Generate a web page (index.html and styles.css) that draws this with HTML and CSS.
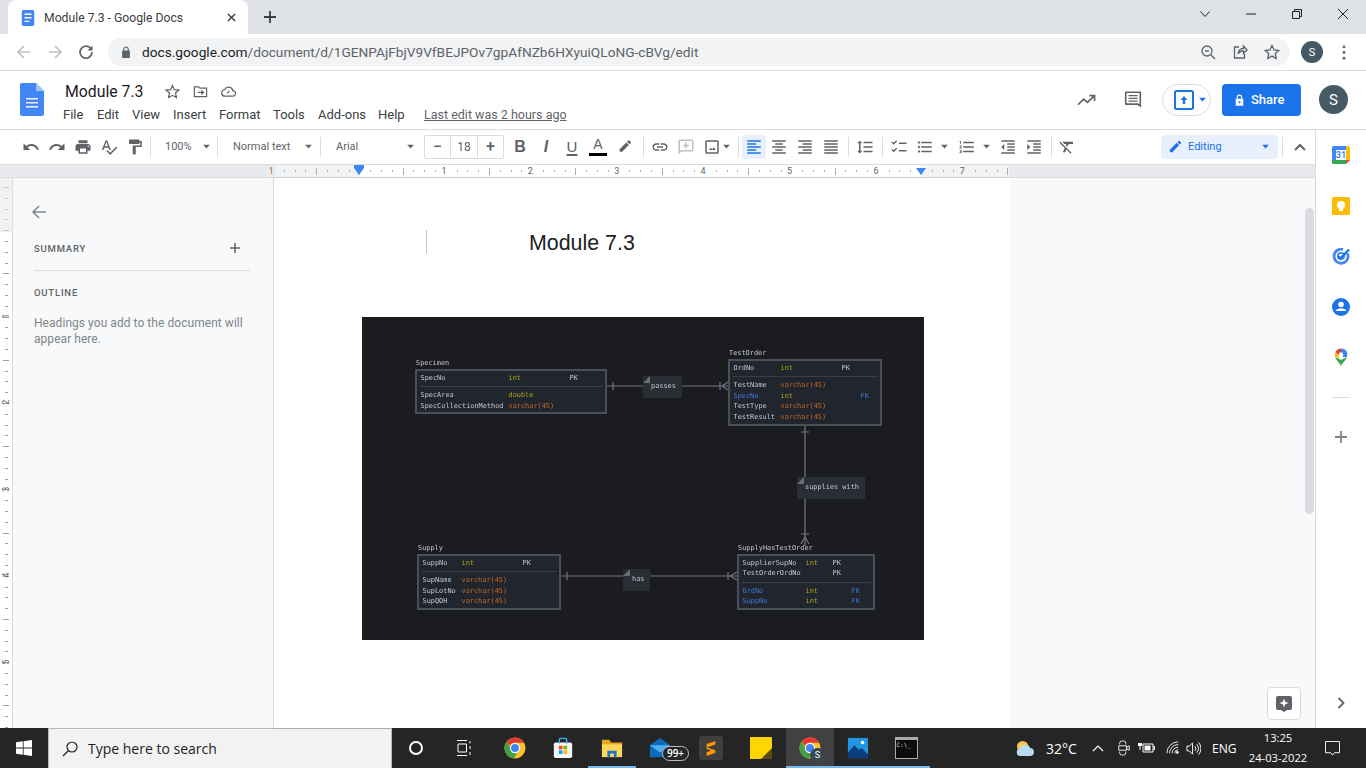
FILE: index.html
```html
<!DOCTYPE html>
<html lang="en">
<head>
<meta charset="utf-8">
<title>Module 7.3 - Google Docs</title>
<link rel="stylesheet" href="styles.css">
</head>
<body>
<svg class="sprite" width="0" height="0" aria-hidden="true">
  <symbol id="chrome" viewBox="0 0 24 24">
    <circle cx="12" cy="12" r="11.5" fill="#fbc02d"/>
    <path fill="#e53935" d="M12 .5a11.5 11.5 0 0 1 10 5.8H12a5.8 5.8 0 0 0-5.4 3.6L2.9 5A11.5 11.5 0 0 1 12 .5z"/>
    <path fill="#43a047" d="M2.9 5l5.2 9a5.8 5.8 0 0 0 6.3 3.3l-3.6 6.2A11.5 11.5 0 0 1 2.9 5z"/>
    <circle cx="12" cy="12" r="5.6" fill="#fff"/>
    <circle cx="12" cy="12" r="4.4" fill="#4285f4"/>
  </symbol>
  <symbol id="caret" viewBox="0 0 10 6"><path d="M1 1h8L5 5.5z"/></symbol>
</svg>

<div class="app">
  <div class="tabbar">
    <div class="tab">
      <svg class="tab-doc" viewBox="0 0 16 18"><rect x="1" width="14" height="18" rx="2" fill="#4285f4"/><path fill="#fff" d="M4 4h8v1.600H4zM4 8h8v1.600H4zM4 12h5.500v1.600H4z"/></svg>
      <span class="tab-title">Module 7.3 - Google Docs</span>
      <svg class="tab-x" viewBox="0 0 10 10"><path d="M1 1l8 8M9 1l-8 8"/></svg>
    </div>
    <svg class="tab-plus" viewBox="0 0 12 12"><path d="M6 0v12M0 6h12"/></svg>
    <div class="win-ctrls">
      <svg class="wc" viewBox="0 0 12 12"><path d="M1.500 3.500L6 8.500l4.500-5"/></svg>
      <svg class="wc" viewBox="0 0 12 12"><path d="M1 6h10"/></svg>
      <svg class="wc" viewBox="0 0 12 12"><path d="M1.500 3.500h7v7h-7zM3.500 3.500V1.500h7v7h-2"/></svg>
      <svg class="wc" viewBox="0 0 12 12"><path d="M1 1l10 10M11 1L1 11"/></svg>
    </div>
  </div>

  <div class="omnibar">
    <svg class="nav dim" viewBox="0 0 16 16"><path d="M14 8H2.500M8 2L2 8l6 6"/></svg>
    <svg class="nav dim" viewBox="0 0 16 16"><path d="M2 8h11.500M8 2l6 6-6 6"/></svg>
    <svg class="nav" viewBox="0 0 16 16"><path d="M13.200 5.200A6 6 0 1 0 14 8"/><path class="solid" d="M14.500 1.500v5h-5z"/></svg>
    <div class="omnibox">
      <svg class="lock" viewBox="0 0 10 13"><path d="M2 5V3.500a3 3 0 0 1 6 0V5h1.200v8H.8V5zm1.200 0h3.600V3.500a1.800 1.800 0 0 0-3.600 0z"/></svg>
      <span class="url"><span class="url-host">docs.google.com</span>/document/d/1GENPAjFbjV9VfBEJPOv7gpAfNZb6HXyuiQLoNG-cBVg/edit</span>
      <svg class="omni-i" viewBox="0 0 16 16"><circle cx="7" cy="7" r="5"/><path d="M11 11l4 4M5 7h4"/></svg>
      <svg class="omni-i" viewBox="0 0 16 16"><path d="M7 3H2.500v11h10v-4M6 10c0-4 3-5.500 5.500-5.500V2L15 6l-3.500 3.500V7C9 7 7 8 6 10z"/></svg>
      <svg class="omni-i" viewBox="0 0 16 16"><path d="M8 1.500l2 4.500 4.800.5-3.600 3.200 1 4.800L8 12.100 3.800 14.500l1-4.800L1.200 6.500 6 6z"/></svg>
    </div>
    <span class="avatar-sm">S</span>
    <svg class="kebab" viewBox="0 0 4 16"><circle cx="2" cy="2" r="1.500"/><circle cx="2" cy="8" r="1.500"/><circle cx="2" cy="14" r="1.500"/></svg>
  </div>

  <header class="docs-head">
    <svg class="docs-logo" viewBox="0 0 24 33">
      <path fill="#4285f4" d="M2 0h14l8 8v23a2 2 0 0 1-2 2H2a2 2 0 0 1-2-2V2a2 2 0 0 1 2-2z"/>
      <path fill="#a1c2fa" d="M16 0l8 8h-8z"/>
      <path fill="#f1f1f1" d="M6 15h12v1.600H6zM6 19h12v1.600H6zM6 23h12v1.600H6z"/>
    </svg>
    <div class="head-text">
      <div class="title-row">
        <span class="doc-title">Module 7.3</span>
        <svg class="ti first" viewBox="0 0 16 16"><path d="M8 1.500l2 4.500 4.800.5-3.600 3.200 1 4.800L8 12.100 3.800 14.500l1-4.800L1.200 6.500 6 6z"/></svg>
        <svg class="ti" viewBox="0 0 16 16"><path d="M1.500 3h4.500l1.500 1.500h7v9h-13zM5 9h6M9 6.800L11.200 9 9 11.200"/></svg>
        <svg class="ti" viewBox="0 0 16 16"><path d="M4.500 13a3.500 3.500 0 0 1-.5-7 4.500 4.500 0 0 1 8.500 1 3 3 0 0 1 0 6zM6.500 10l2.500-2.500"/></svg>
      </div>
      <nav class="menu">
        <span class="m-file">File</span><span class="m-edit">Edit</span><span class="m-view">View</span><span class="m-insert">Insert</span><span class="m-format">Format</span><span class="m-tools">Tools</span><span class="m-addons">Add-ons</span><span class="m-help">Help</span><span class="last-edit">Last edit was 2 hours ago</span>
      </nav>
    </div>
    <div class="head-right">
      <svg class="hr-trend" viewBox="0 0 20 12"><path d="M1 11l6-6 4 3.500L18 2M13 1.500h5.500V7"/></svg>
      <svg class="hr-comment" viewBox="0 0 20 20"><path fill-rule="evenodd" d="M2 1h16a1 1 0 0 1 1 1v17l-4-3H2a1 1 0 0 1-1-1V2a1 1 0 0 1 1-1zm.8 1.800v11.400h12.900l1.500 1V2.800zM5 5h10v1.500H5zm0 3h10v1.500H5zm0 3h10v1.500H5z"/></svg>
      <div class="present">
        <svg class="present-i" viewBox="0 0 20 20"><rect x="1" y="1" width="18" height="18" rx="1.500" fill="none" stroke="#1a73e8" stroke-width="2"/><path fill="#1a73e8" d="M10 6l3.500 4h-2.300v4H8.800v-4H6.500z"/></svg>
        <svg class="caret blue" viewBox="0 0 10 6"><use href="#caret"/></svg>
      </div>
      <div class="share">
        <svg class="share-lock" viewBox="0 0 10 13"><path fill="#fff" d="M2 5V3.500a3 3 0 0 1 6 0V5h1.200v8H.8V5zm1.200 0h3.600V3.500a1.800 1.800 0 0 0-3.600 0zM5 7.800a1.200 1.200 0 1 0 0 2.400 1.200 1.200 0 0 0 0-2.400z" fill-rule="evenodd"/></svg>
        <span>Share</span>
      </div>
      <span class="avatar-lg">S</span>
    </div>
  </header>

  <div class="body-split">
    <div class="work">
      <div class="toolbar">
        <span class="btn"><svg class="i" viewBox="0 0 24 24"><path d="M12.500 8c-2.650 0-5.050.99-6.900 2.600L2 7v9h9l-3.620-3.620c1.390-1.160 3.160-1.880 5.120-1.880 3.540 0 6.550 2.310 7.600 5.500l2.370-.78C21.080 11.030 17.150 8 12.500 8z"/></svg></span>
        <span class="btn"><svg class="i" viewBox="0 0 24 24"><path d="M18.400 10.600C16.550 8.990 14.150 8 11.500 8c-4.650 0-8.580 3.030-9.960 7.220L3.900 16c1.050-3.190 4.050-5.500 7.600-5.500 1.950 0 3.730.72 5.120 1.880L13 16h9V7l-3.600 3.600z"/></svg></span>
        <span class="btn"><svg class="i" viewBox="0 0 24 24"><path d="M19 8H5c-1.660 0-3 1.340-3 3v6h4v4h12v-4h4v-6c0-1.660-1.340-3-3-3zm-3 11H8v-5h8v5zm3-7c-.55 0-1-.45-1-1s.45-1 1-1 1 .45 1 1-.45 1-1 1zm-1-9H6v4h12V3z"/></svg></span>
        <span class="btn"><svg class="i" viewBox="0 0 24 24"><path d="M12.450 16h2.090L9.430 3H7.570L2.460 16h2.090l1.120-3h5.640l1.140 3zm-6.020-5L8.500 5.480 10.570 11H6.430zm15.160.59l-8.090 8.090L9.830 16l-1.410 1.410 5.090 5.090L23 13l-1.410-1.410z"/></svg></span>
        <span class="btn"><svg class="i" viewBox="0 0 24 24"><path d="M18 4V3c0-.55-.45-1-1-1H5c-.55 0-1 .45-1 1v4c0 .55.45 1 1 1h12c.55 0 1-.45 1-1V6h1v4H9v11c0 .55.45 1 1 1h2c.55 0 1-.45 1-1v-9h8V4h-3z"/></svg></span>
        <span class="sep ml2"></span>
        <span class="sel w-zoom">100%<svg class="caret" viewBox="0 0 10 6"><use href="#caret"/></svg></span>
        <span class="sep"></span>
        <span class="sel w-style">Normal text<svg class="caret" viewBox="0 0 10 6"><use href="#caret"/></svg></span>
        <span class="sep"></span>
        <span class="sel w-font">Arial<svg class="caret" viewBox="0 0 10 6"><use href="#caret"/></svg></span>
        <span class="fsize">
          <span class="fs-btn">&minus;</span><span class="fs-val">18</span><span class="fs-btn">+</span>
        </span>
        <span class="btn ml3 letter l-b">B</span>
        <span class="btn letter l-i">I</span>
        <span class="btn letter l-u">U</span>
        <span class="btn color-a"><span class="a-glyph">A</span><span class="a-bar"></span></span>
        <span class="btn ml1"><svg class="i sm" viewBox="0 0 24 24"><path d="M17.750 7L14 3.250l-10 10V17h3.750l10-10zm2.960-2.960c.39-.39.39-1.020 0-1.410L18.370.29c-.39-.39-1.020-.39-1.410 0L15 2.250 18.750 6l1.960-1.960z" transform="translate(0 2)"/></svg></span>
        <span class="sep ml5"></span>
        <span class="btn ml3"><svg class="i" viewBox="0 0 24 24"><path d="M3.900 12c0-1.710 1.390-3.100 3.100-3.100h4V7H7c-2.760 0-5 2.240-5 5s2.240 5 5 5h4v-1.900H7c-1.710 0-3.100-1.390-3.100-3.100zM8 13h8v-2H8v2zm9-6h-4v1.900h4c1.710 0 3.100 1.390 3.100 3.100s-1.390 3.100-3.100 3.100h-4V17h4c2.760 0 5-2.240 5-5s-2.240-5-5-5z"/></svg></span>
        <span class="btn"><svg class="i light" viewBox="0 0 24 24"><path fill-rule="evenodd" d="M4 2h16a2 2 0 0 1 2 2v12a2 2 0 0 1-2 2H6l-4 4V4a2 2 0 0 1 2-2zm0 2v13l1.200-1H20V4zm7 2h2v3h3v2h-3v3h-2v-3H8V9h3z"/></svg></span>
        <span class="btn-caret w-img"><svg class="i" viewBox="0 0 24 24"><path fill-rule="evenodd" d="M5 3h14a2 2 0 0 1 2 2v14a2 2 0 0 1-2 2H5a2 2 0 0 1-2-2V5a2 2 0 0 1 2-2zm0 2v14h14V5zm3 11l2.500-3 1.800 2.200 2.200-3 2.500 3.800z"/></svg><svg class="caret" viewBox="0 0 10 6"><use href="#caret"/></svg></span>
        <span class="sep ml5"></span>
        <span class="btn ml3 active w-24"><svg class="i blue-i" viewBox="0 0 24 24"><path d="M3 3h18v2H3zM3 7h12v2H3zM3 11h18v2H3zM3 15h12v2H3zM3 19h18v2H3z"/></svg></span>
        <span class="btn"><svg class="i" viewBox="0 0 24 24"><path d="M3 3h18v2H3zM7 7h10v2H7zM3 11h18v2H3zM7 15h10v2H7zM3 19h18v2H3z"/></svg></span>
        <span class="btn"><svg class="i" viewBox="0 0 24 24"><path d="M3 3h18v2H3zM9 7h12v2H9zM3 11h18v2H3zM9 15h12v2H9zM3 19h18v2H3z"/></svg></span>
        <span class="btn"><svg class="i" viewBox="0 0 24 24"><path d="M3 3h18v2H3zM3 7h18v2H3zM3 11h18v2H3zM3 15h18v2H3zM3 19h18v2H3z"/></svg></span>
        <span class="sep ml4"></span>
        <span class="btn ml3"><svg class="i" viewBox="0 0 24 24"><path d="M6 7h2.500L5 3.500 1.500 7H4v10H1.500L5 20.500 8.500 17H6V7zm4-2v2h12V5H10zm0 14h12v-2H10v2zm0-6h12v-2H10v2z"/></svg></span>
        <span class="sep ml4"></span>
        <span class="btn ml3"><svg class="i" viewBox="0 0 24 24"><path d="M2 6l1.400-1.400L5 6.200 8.200 3l1.400 1.400L5 9zM2 16l1.400-1.400L5 16.200 8.200 13l1.400 1.400L5 19zM12 6h10v2H12zM12 16h10v2H12z"/></svg></span>
        <span class="btn-caret w-list"><svg class="i" viewBox="0 0 24 24"><path d="M4 10.500c-.83 0-1.500.67-1.500 1.500s.67 1.500 1.500 1.500 1.500-.67 1.500-1.500-.67-1.500-1.500-1.500zm0-6c-.83 0-1.500.67-1.500 1.500S3.170 7.500 4 7.500 5.500 6.830 5.500 6 4.830 4.500 4 4.500zm0 12c-.83 0-1.500.68-1.500 1.500s.68 1.500 1.500 1.500 1.500-.68 1.500-1.500-.67-1.500-1.500-1.500zM7 19h14v-2H7v2zm0-6h14v-2H7v2zm0-8v2h14V5H7z"/></svg><svg class="caret" viewBox="0 0 10 6"><use href="#caret"/></svg></span>
        <span class="btn-caret w-list"><svg class="i" viewBox="0 0 24 24"><path d="M2 17h2v.5H3v1h1v.5H2v1h3v-4H2v1zm1-9h1V4H2v1h1v3zm-1 3h1.800L2 13.100v.9h3v-1H3.200L5 10.900V10H2v1zm5-6v2h14V5H7zm0 14h14v-2H7v2zm0-6h14v-2H7v2z"/></svg><svg class="caret" viewBox="0 0 10 6"><use href="#caret"/></svg></span>
        <span class="btn mln1"><svg class="i" viewBox="0 0 24 24"><path d="M11 17h10v-2H11v2zm-8-5l4 4V8l-4 4zm0 9h18v-2H3v2zM3 3v2h18V3H3zm8 6h10V7H11v2zm0 4h10v-2H11v2z"/></svg></span>
        <span class="btn"><svg class="i" viewBox="0 0 24 24"><path d="M3 21h18v-2H3v2zM3 8v8l4-4-4-4zm8 9h10v-2H11v2zM3 3v2h18V3H3zm8 6h10V7H11v2zm0 4h10v-2H11v2z"/></svg></span>
        <span class="sep ml4"></span>
        <span class="btn ml2"><svg class="i" viewBox="0 0 24 24"><path d="M3.270 5L2 6.270l6.970 6.970L6.500 19h3l1.570-3.660L16.730 21 18 19.730 3.550 5.270 3.270 5zM6 5v.18L8.820 8h2.400l-.72 1.680 2.100 2.100L14.210 8H20V5H6z"/></svg></span>
        <span class="editing">
          <svg class="edit-i" viewBox="0 0 24 24"><path d="M3 17.250V21h3.750L17.810 9.940l-3.750-3.750L3 17.250zM20.710 7.040c.39-.39.39-1.020 0-1.410l-2.340-2.340c-.39-.39-1.020-.39-1.410 0l-1.830 1.830 3.750 3.750 1.830-1.830z"/></svg>
          <span>Editing</span>
          <svg class="caret blue" viewBox="0 0 10 6"><use href="#caret"/></svg>
        </span>
        <span class="sep ml4"></span>
        <span class="btn ml4"><svg class="chev" viewBox="0 0 12 8"><path d="M1 7l5-5 5 5"/></svg></span>
      </div>

      <div class="ruler">
        <div class="ruler-left"></div>
        <div class="ruler-track">
          <div class="rz rz-margin"></div>
          <div class="rz rz-text"></div>
          <div class="rz rz-margin2"></div>
          <div class="ruler-nums">
            <span><i class="out">1</i></span><span></span><span><i>1</i></span><span><i>2</i></span><span><i>3</i></span><span><i>4</i></span><span><i>5</i></span><span><i>6</i></span><span><i class="out">7</i></span>
          </div>
          <span class="indent-mark im-left"></span>
          <span class="indent-mark im-right"></span>
        </div>
      </div>

      <div class="main">
        <div class="vruler">
          <div class="vr-top"></div>
          <div class="vr-nums"><span>1</span><span>2</span><span>3</span><span>4</span><span>5</span></div>
        </div>
        <aside class="outline">
          <svg class="back" viewBox="0 0 16 16"><path d="M15 8H2M8 2L2 8l6 6"/></svg>
          <div class="ol-head"><span class="ol-label">SUMMARY</span><svg class="ol-plus" viewBox="0 0 10 10"><path d="M5 0v10M0 5h10"/></svg></div>
          <div class="ol-rule"></div>
          <div class="ol-label ol-outline">OUTLINE</div>
          <p class="ol-note">Headings you add to the document will appear here.</p>
        </aside>
        <main class="page">
          <span class="text-cursor"></span>
          <h1 class="page-title">Module 7.3</h1>
          <div class="erd">
            <svg class="erd-lines" viewBox="0 0 562 323" width="562" height="323">
              <path d="M245 69h36M320 69h46M443 109v120M199 259h62M288 259h87"/>
              <path d="M251 65v8M358 65v8M360 69l6-4M360 69l6 4M439 115h8M439 217h8M443 220l-4 7M443 220l4 7M205 255v8M366 255v8M368 259l7-4M368 259l7 4"/>
            </svg>

            <div class="tbl t-spec">
              <div class="tbl-name">Specimen</div>
              <div class="tbl-box">
                <div class="row"><span>SpecNo</span><span class="yl">int</span><span>PK</span></div>
                <div class="tbl-rule"></div>
                <div class="row"><span>SpecArea</span><span class="yl">double</span></div>
                <div class="row"><span>SpecCollectionMethod</span><span class="or">varchar(45)</span></div>
              </div>
            </div>

            <div class="tbl t-test">
              <div class="tbl-name">TestOrder</div>
              <div class="tbl-box">
                <div class="row"><span>OrdNo</span><span class="yl">int</span><span>PK</span></div>
                <div class="tbl-rule"></div>
                <div class="row"><span>TestName</span><span class="or">varchar(45)</span></div>
                <div class="row"><span class="bl">SpecNo</span><span class="yl">int</span><span></span><span class="bl">FK</span></div>
                <div class="row"><span>TestType</span><span class="or">varchar(45)</span></div>
                <div class="row"><span>TestResult</span><span class="or">varchar(45)</span></div>
              </div>
            </div>

            <div class="tbl t-supply">
              <div class="tbl-name">Supply</div>
              <div class="tbl-box">
                <div class="row"><span>SuppNo</span><span class="yl">int</span><span>PK</span></div>
                <div class="tbl-rule"></div>
                <div class="row"><span>SupName</span><span class="or">varchar(45)</span></div>
                <div class="row"><span>SupLotNo</span><span class="or">varchar(45)</span></div>
                <div class="row"><span>SupQOH</span><span class="or">varchar(45)</span></div>
              </div>
            </div>

            <div class="tbl t-link">
              <div class="tbl-name">SupplyHasTestOrder</div>
              <div class="tbl-box">
                <div class="row"><span>SupplierSupNo</span><span class="yl">int</span><span>PK</span></div>
                <div class="row"><span>TestOrderOrdNo</span><span></span><span>PK</span></div>
                <div class="tbl-rule"></div>
                <div class="row"><span class="bl">OrdNo</span><span class="yl">int</span><span></span><span class="bl">FK</span></div>
                <div class="row"><span class="bl">SuppNo</span><span class="yl">int</span><span></span><span class="bl">FK</span></div>
              </div>
            </div>

            <div class="note n-passes">passes</div>
            <div class="note n-supplies">supplies with</div>
            <div class="note n-has">has</div>
          </div>
        </main>
        <div class="gutter">
          <div class="scroll-thumb"></div>
          <div class="explore">
            <svg class="explore-i" viewBox="0 0 16 16"><path fill-rule="evenodd" d="M2 0h12a2 2 0 0 1 2 2v10a2 2 0 0 1-2 2h-3l-3 2-3-2H2a2 2 0 0 1-2-2V2a2 2 0 0 1 2-2zm6 2.500L6.800 5.800 3.500 7l3.300 1.200L8 11.500l1.200-3.300L12.500 7 9.200 5.800z"/></svg>
          </div>
        </div>
      </div>
    </div>

    <aside class="sidepanel">
      <svg class="sp-i" viewBox="0 0 18 18">
        <rect width="18" height="18" rx="1.500" fill="#fff"/>
        <path fill="#fbbc04" d="M14 0h2.500A1.500 1.500 0 0 1 18 1.500V14h-4z"/>
        <path fill="#4285f4" d="M1.500 0H14v4H0V1.500A1.500 1.500 0 0 1 1.500 0zM0 4h4v10H0z"/>
        <path fill="#34a853" d="M0 14h14v4H1.500A1.500 1.500 0 0 1 0 16.500z"/>
        <path fill="#ea4335" d="M14 14h4l-4 4z"/>
        <text class="cal-num" x="9" y="12" text-anchor="middle">31</text>
      </svg>
      <svg class="sp-i" viewBox="0 0 18 18"><rect width="18" height="18" rx="1.500" fill="#fbbc04"/><circle cx="9" cy="8" r="4" fill="#fff"/><rect x="7" y="11.500" width="4" height="2.500" fill="#fff"/></svg>
      <svg class="sp-i" viewBox="0 0 18 18"><path d="M15.500 6.500A7 7 0 1 1 11 2.500" fill="none" stroke="#4285f4" stroke-width="2.800"/><circle cx="9" cy="9" r="3.200" fill="none" stroke="#4285f4" stroke-width="1.800"/><path d="M6 9l2.500 2.500L17 2.500" fill="none" stroke="#1a73e8" stroke-width="2.400"/></svg>
      <svg class="sp-i" viewBox="0 0 18 18"><circle cx="9" cy="9" r="9" fill="#1a73e8"/><circle cx="9" cy="6.500" r="2.800" fill="#fff"/><path fill="#fff" d="M3.500 13c1-2 3.200-2.800 5.500-2.800s4.500.8 5.500 2.800z"/></svg>
      <svg class="sp-i" viewBox="0 0 18 18">
        <path fill="#34a853" d="M9 18c-1-3-5-5.500-5.800-9L9 12l5.800-3C14 12.500 10 15 9 18z"/>
        <path fill="#fbbc04" d="M3.200 9A6 6 0 0 1 3.500 4l3 3 1 3z"/>
        <path fill="#ea4335" d="M3.500 4A6 6 0 0 1 9 .5L9 5 6.500 7z"/>
        <path fill="#4285f4" d="M9 .5A6 6 0 0 1 14.800 9L11 9 9 5z"/>
        <circle cx="9" cy="6.500" r="2.200" fill="#fff"/>
      </svg>
      <div class="sp-rule"></div>
      <svg class="sp-plus" viewBox="0 0 12 12"><path d="M6 0v12M0 6h12"/></svg>
      <svg class="sp-chev" viewBox="0 0 8 12"><path d="M1.500 1l5 5-5 5"/></svg>
    </aside>
  </div>

  <footer class="taskbar">
    <div class="start"><svg class="win-logo" viewBox="0 0 16 16"><path fill="#fff" d="M0 2.300l6.800-1v6.300H0zM7.600 1.200L16 0v7.600H7.600zM0 8.400h6.800v6.300l-6.800-1zM7.600 8.400H16V16l-8.400-1.200z"/></svg></div>
    <div class="search">
      <svg class="search-i" viewBox="0 0 16 16"><circle cx="10" cy="6" r="5"/><path d="M6.500 9.500L1 15"/></svg>
      <span>Type here to search</span>
    </div>
    <div class="slot w48"><span class="cortana"></span></div>
    <div class="slot w47"><svg class="taskview" viewBox="0 0 16 16"><path d="M1 .5h10M1 15.500h10M2 4h8.500v8H2zM14 1v2.500M14 6v3M14 12v3"/></svg></div>
    <div class="slot w48 sl4"><svg class="tb-app" viewBox="0 0 24 24"><use href="#chrome"/></svg></div>
    <div class="slot w48"><svg class="tb-app" viewBox="0 0 24 24"><rect x="2" y="6" width="20" height="17" rx="2" fill="#f5f5f5"/><path d="M8 7V3a1.500 1.500 0 0 1 1.500-1.500h5A1.500 1.500 0 0 1 16 3v4" fill="none" stroke="#29b6f6" stroke-width="1.600"/><path fill="#f25022" d="M7.500 9.500h4v4h-4z"/><path fill="#7fba00" d="M12.500 9.500h4v4h-4z"/><path fill="#00a4ef" d="M7.500 14.500h4v4h-4z"/><path fill="#ffb900" d="M12.500 14.500h4v4h-4z"/></svg></div>
    <div class="slot w48 sl1 running"><svg class="tb-app" viewBox="0 0 24 24"><path fill="#e8a51d" d="M1 3h8l2 3h12v5H1z"/><path fill="#ffd75e" d="M1 8h22v14H1z"/><path fill="#1976c9" d="M7 22v-7h10v7h-3v-4h-4v4z"/></svg></div>
    <div class="slot w48 mail-slot"><svg class="tb-app" viewBox="0 0 24 24"><path fill="#0f6cbd" d="M1 9l11-8 11 8v13H1z"/><path fill="#50b0f0" d="M1 9h22L12 17z"/></svg><span class="badge">99+</span></div>
    <div class="slot w48 sl3"><span class="sublime"><svg viewBox="0 0 16 18" class="subl-i"><path fill="#ff9800" d="M13 1v4L3 8.500v-4zM3 8l10 3.500v3L3 18v-4.200l5.500-1.900L3 10z"/></svg></span></div>
    <div class="slot w48 sl2"><span class="sticky"><svg viewBox="0 0 10 10" class="sticky-fold"><path fill="#5c4a0c" d="M0 10L10 0v10z"/></svg></span></div>
    <div class="slot w48 sl1 running active-app"><svg class="tb-app" viewBox="0 0 24 24"><use href="#chrome"/></svg><span class="chrome-s">S</span></div>
    <div class="slot w48 running"><svg class="tb-app" viewBox="0 0 24 24"><rect x="1" y="1" width="22" height="22" fill="#2196e0"/><path fill="#0b3d7c" d="M1 23v-6l7-8 5 5 3-2 7 7v4z"/><circle cx="17" cy="6" r="2" fill="#fff"/></svg></div>
    <div class="slot w48 running"><span class="cmd"><span class="cmd-text">C:\_</span></span></div>

    <div class="tray">
      <svg class="tray-weather" viewBox="0 0 22 18"><circle cx="8" cy="7" r="6" fill="#f9c74f"/><path fill="#b9dcf5" d="M6 17a4 4 0 0 1-.5-8 5.500 5.500 0 0 1 10.400-.5A4.300 4.300 0 0 1 16.500 17z"/></svg>
      <span class="temp">32°C</span>
      <svg class="tray-chev" viewBox="0 0 12 8"><path d="M1 7l5-5 5 5"/></svg>
      <svg class="tray-i t-meet" viewBox="0 0 16 18"><path d="M3 5V3.500A2.500 2.500 0 0 1 5.500 1h2A2.500 2.500 0 0 1 10 3.500V5M3 13v1.500A2.500 2.500 0 0 0 5.500 17h2a2.500 2.500 0 0 0 2.500-2.500V13M2 6.500h9v5H2zM11 8l3-1.500v5L11 10"/></svg>
      <svg class="tray-i t-batt" viewBox="0 0 18 14"><path d="M6 3h10v8H6zM16 5.500h1.500v3H16"/><path class="fillw" d="M7.500 4.500h6v5h-6zM1 2h4v3H1zM2.500 5h1v4h-1z"/></svg>
      <svg class="tray-i t-wifi" viewBox="0 0 16 16"><path d="M1 14A13 13 0 0 1 14 1M4 14A10 10 0 0 1 14 4M7 14a7 7 0 0 1 7-7M10 14a4 4 0 0 1 4-4"/><circle class="fillw" cx="13" cy="13" r="1.500"/></svg>
      <svg class="tray-i t-vol" viewBox="0 0 16 16"><path d="M1 5.500h2.500L7 2v12l-3.500-3.500H1zM9.500 5.500a4 4 0 0 1 0 5M11.500 3.500a7 7 0 0 1 0 9M13.500 1.500a10 10 0 0 1 0 13"/></svg>
      <span class="lang">ENG</span>
      <div class="clock"><span>13:25</span><span>24-03-2022</span></div>
      <svg class="notif" viewBox="0 0 16 16"><path d="M.5.500h15v12H10L8 15l-2-2.500H.5z"/></svg>
    </div>
  </footer>
</div>
</body>
</html>
```

FILE: styles.css
```css
* { box-sizing: border-box; }
html, body { margin: 0; height: 768px; overflow: hidden; }
body { font-family: Roboto, "Liberation Sans", sans-serif; color: #3c4043; background: #fff; }
.sprite { display: block; height: 0; }
svg { display: block; flex: none; }
.app { width: 1366px; height: 768px; display: flex; flex-direction: column; overflow: hidden; }

/* browser tabs */
.tabbar { height: 34px; flex: none; background: #dee1e6; display: flex; align-items: flex-end; padding-left: 8px; }
.tab { width: 240px; height: 34px; background: #fff; border-radius: 8px 8px 0 0; margin-top: 0; display: flex; align-items: center; padding-left: 12px; padding-right: 10px; }
.tab-doc { width: 16px; height: 16px; margin-top: 2px; }
.tab-title { font-size: 12.200px; color: #3c4043; margin-left: 8px; flex: 1; margin-top: 1px; white-space: nowrap; }
.tab-x { width: 9px; height: 9px; fill: none; stroke: #3c4043; stroke-width: 1.6; margin-top: 1px; margin-right: 2px; }
.tab-plus { width: 12px; height: 12px; fill: none; stroke: #3c4043; stroke-width: 1.8; margin: 0 0 11px 16px; }
.win-ctrls { margin-left: auto; display: flex; align-self: flex-start; padding-top: 8px; padding-right: 17px; gap: 34px; }
.wc { width: 12px; height: 12px; fill: none; stroke: #202124; stroke-width: 1; }

/* omnibox */
.omnibar { height: 37px; flex: none; background: #fff; border-bottom: 1px solid #dadce0; display: flex; align-items: center; padding: 0 0 0 16px; }
.nav { width: 16px; height: 16px; fill: none; stroke: #5f6368; stroke-width: 1.7; margin-right: 15px; }
.nav.dim { stroke: #bdc1c6; }
.nav .solid { fill: #5f6368; stroke: none; }
.omnibox { width: 1182px; height: 28px; margin-left: -1px; margin-right: 11px; background: #f1f3f4; border-radius: 14px; display: flex; align-items: center; padding: 0 10px 0 13px; }
.lock { width: 10px; height: 12px; fill: #5f6368; }
.url { font-size: 13.700px; color: #5f6368; margin-left: 11px; flex: 1; white-space: nowrap; }
.url-host { color: #202124; }
.omni-i { width: 16px; height: 16px; fill: none; stroke: #5f6368; stroke-width: 1.3; margin-left: 16px; }
.avatar-sm { width: 22px; height: 22px; border-radius: 50%; background: #455a64; color: #fff; font-size: 11px; display: flex; align-items: center; justify-content: center; }
.kebab { width: 4px; height: 15px; fill: #5f6368; margin-left: 19px; }

/* docs header */
.docs-head { height: 59px; flex: none; border-bottom: 1px solid #dadce0; display: flex; padding-left: 20px; background: #fff; }
.docs-logo { width: 24px; height: 33px; margin-top: 12px; }
.head-text { margin-left: 20px; padding-top: 9px; }
.title-row { display: flex; align-items: center; height: 22px; margin-left: 1px; }
.doc-title { font-size: 15.800px; color: #202124; width: 78px; white-space: nowrap; }
.ti { width: 15px; height: 15px; fill: none; stroke: #5f6368; stroke-width: 1.300; margin-left: 13px; }
.ti.first { margin-left: 22px; }
.menu { display: flex; font-size: 13px; color: #3c4043; margin-top: 3px; height: 18px; align-items: center; white-space: nowrap; }
.m-file { margin-left: -1px; width: 34px; }
.m-edit { width: 35px; }
.m-view { width: 41px; }
.m-insert { width: 46px; }
.m-format { width: 54px; }
.m-tools { width: 45px; }
.m-addons { width: 60px; }
.m-help { width: 46px; }
.last-edit { font-size: 12.500px; color: #5f6368; text-decoration: underline; }
.head-right { margin-left: auto; display: flex; align-items: center; padding: 0 18px 1px 0; }
.hr-trend { width: 19px; height: 12px; fill: none; stroke: #5f6368; stroke-width: 1.800; }
.hr-comment { width: 18px; height: 19px; fill: #5f6368; margin-left: 28px; }
.present { width: 49px; height: 32px; margin-left: 20px; border: 1px solid #dadce0; border-radius: 16px; display: flex; align-items: center; padding-left: 11px; }
.present-i { width: 20px; height: 20px; }
.caret { width: 9px; height: 5px; fill: #5f6368; }
.caret.blue { fill: #1a73e8; }
.present .caret { margin-left: 4px; }
.share { width: 79px; height: 32px; margin-left: 11px; background: #1a73e8; border-radius: 4px; color: #fff; font-size: 13px; font-weight: 500; display: flex; align-items: center; padding-left: 13px; gap: 7px; }
.share-lock { width: 9px; height: 12px; }
.avatar-lg { width: 29px; height: 29px; margin-left: 18px; border-radius: 50%; background: #455a64; color: #fff; font-size: 15px; display: flex; align-items: center; justify-content: center; }

/* work area */
.body-split { flex: 1; display: flex; min-height: 0; }
.work { width: 1316px; display: flex; flex-direction: column; min-width: 0; border-right: 1px solid #dadce0; flex: none; }

/* toolbar */
.toolbar { height: 35px; flex: none; border-bottom: 1px solid #dadce0; display: flex; align-items: center; padding: 0 0 1px 18px; background: #fff; }
.btn { width: 26px; height: 24px; display: flex; align-items: center; justify-content: center; flex: none; border-radius: 2px; }
.i { width: 18px; height: 18px; fill: #5f6368; }
.i.sm { width: 16px; height: 16px; }
.i.light { fill: #bdc1c6; }
.i.blue-i { fill: #1a73e8; }
.sep { width: 1px; height: 20px; background: #dadce0; flex: none; }
.ml1 { margin-left: 1px; }
.ml2 { margin-left: 2px; }
.ml3 { margin-left: 3px; }
.ml4 { margin-left: 4px; }
.ml5 { margin-left: 5px; }
.mln1 { margin-left: -1px; }
.sel { height: 24px; display: flex; align-items: center; font-size: 11px; color: #5f6368; padding: 0 6px 0 14px; flex: none; }
.sel .caret { margin-left: auto; }
.w-zoom { width: 66px; }
.w-style { width: 102px; padding: 0 7px 0 15px; }
.w-font { width: 99px; padding: 0 5px 0 15px; }
.fsize { width: 80px; height: 24px; margin-left: 4px; border: 1px solid #dadce0; border-radius: 2px; display: flex; font-size: 12px; color: #5f6368; flex: none; }
.fs-btn { width: 25px; display: flex; align-items: center; justify-content: center; font-size: 16px; font-weight: 500; }
.fs-val { flex: 1; display: flex; align-items: center; justify-content: center; border-left: 1px solid #dadce0; border-right: 1px solid #dadce0; }
.letter { font-size: 15px; color: #5f6368; font-family: "Liberation Sans", sans-serif; font-weight: 700; }
.l-b { font-size: 16px; }
.l-i { font-style: italic; font-size: 16px; }
.l-u { font-weight: 400; text-decoration: underline; text-underline-offset: 2px; text-decoration-thickness: 2px; }
.color-a { flex-direction: column; justify-content: center; }
.a-glyph { font-size: 14px; line-height: 14px; color: #5f6368; font-family: "Liberation Sans", sans-serif; }
.a-bar { width: 18px; height: 3px; background: #000; margin-top: 2px; }
.btn-caret { height: 24px; display: flex; align-items: center; padding-left: 4px; flex: none; }
.w-img { width: 34px; }
.w-img .caret { margin-left: 1px; }
.w-list { width: 42px; }
.w-list .caret { margin-left: 6px; }
.active { background: #e8f0fe; }
.w-24 { width: 24px; }
.editing { width: 117px; height: 24px; margin-left: 81px; background: #e8f0fe; border-radius: 4px; display: flex; align-items: center; padding: 0 8px 0 7px; color: #1a73e8; font-size: 11px; flex: none; }
.edit-i { width: 15px; height: 15px; fill: #1a73e8; margin-right: 5px; }
.editing .caret { margin-left: auto; }
.chev { width: 12px; height: 8px; fill: none; stroke: #5f6368; stroke-width: 2; }

/* horizontal ruler */
.ruler { height: 13px; flex: none; display: flex; background: #e8eaed; border-bottom: 1px solid #dadce0; }
.ruler-left { width: 228px; flex: none; }
.ruler-track { width: 782px; flex: none; position: relative; display: flex; }
.rz { height: 12px; }
.rz-margin { width: 131px; background: #f1f3f4 linear-gradient(90deg, #e8eaed 0 45px, transparent 45px); }
.rz-text { width: 562px; background: #fff; }
.rz-margin2 { width: 88px; background: #f1f3f4; }
.ruler-nums { position: absolute; inset: 0; display: grid; grid-template-columns: repeat(9, 86.4px); background-image: repeating-linear-gradient(90deg, #a8acb1 0 1px, transparent 1px 10.8px), repeating-linear-gradient(90deg, #a8acb1 0 1px, transparent 1px 43.2px); background-size: 100% 2px, 100% 7px; background-position: 44.600px 5px, 44.600px 2.500px; background-repeat: no-repeat; }
.ruler-nums span { display: flex; justify-content: center; }
.ruler-nums i { font-style: normal; font-size: 9px; line-height: 12px; color: #5f6368; padding: 0 2px; background: #fff; }
.ruler-nums i.out { background: #f1f3f4; }
.ruler-nums span:first-child i { color: #b06a3a; background: #ebedf0; }
.indent-mark { position: absolute; top: 3px; width: 0; height: 0; border-left: 5px solid transparent; border-right: 5px solid transparent; border-top: 7px solid #4285f4; }
.im-left { left: 126px; }
.im-right { left: 688px; }
.im-left::before { content: ""; position: absolute; left: -5px; top: -10px; width: 10px; height: 3px; background: #4285f4; }

/* main row */
.main { flex: 1; display: flex; min-height: 0; background: #f8f9fa; }
.vruler { width: 13px; flex: none; background-color: #fff; background-image: repeating-linear-gradient(180deg, #9aa0a6 0 1px, transparent 1px 10.8px), repeating-linear-gradient(180deg, #9aa0a6 0 1px, transparent 1px 43.2px); background-repeat: no-repeat; background-size: 3px 100%, 6px 100%; background-position: 5px 9.200px, 3px 9.200px; border-right: 1px solid #dadce0; display: flex; flex-direction: column; }
.vr-top { height: 54px; flex: none; background: rgba(232, 234, 237, .6); }
.vr-nums { display: flex; flex-direction: column; padding-top: 41px; }
.vr-nums span { height: 86.4px; line-height: 86.4px; font-size: 9px; color: #5f6368; width: 12px; text-align: center; transform: rotate(-90deg); flex: none; }

/* outline */
.outline { width: 261px; flex: none; padding: 26px 23px 0 21px; background: #f8f9fa; border-right: 1px solid #e8eaed; }
.back { width: 16px; height: 16px; margin-left: -3px; fill: none; stroke: #80868b; stroke-width: 1.500; }
.ol-head { display: flex; justify-content: space-between; align-items: center; margin-top: 21px; padding-right: 10px; height: 14px; }
.ol-label { font-size: 9.500px; font-weight: 500; letter-spacing: .8px; color: #5f6368; }
.ol-plus { width: 10px; height: 10px; fill: none; stroke: #5f6368; stroke-width: 1.500; }
.ol-rule { height: 1px; background: #dadce0; margin-top: 15px; width: 216px; }
.ol-outline { margin-top: 16px; line-height: 12px; }
.ol-note { margin: 16px 0 0; font-size: 12px; letter-spacing: .05px; line-height: 16px; color: #80868b; width: 216px; }

/* page */
.page { width: 736px; flex: none; background: #fff; box-shadow: 0 0 2px rgba(60, 64, 67, .25); position: relative; padding: 51px 0 0 88px; }
.page-title { margin: 0 0 60px 167px; font-family: "Liberation Sans", Arial, sans-serif; font-size: 21.400px; line-height: 28px; font-weight: 400; color: #202124; }
.text-cursor { position: absolute; left: 152px; top: 52px; width: 1px; height: 24px; background: #c4c7c5; }
.erd { width: 562px; height: 323px; background: #1b1c20; position: relative; font-family: "DejaVu Sans Mono", "Liberation Mono", monospace; font-size: 6.900px; color: #c5c8ce; filter: blur(.55px); overflow: hidden; }
.erd-lines { position: absolute; left: 0; top: 0; fill: none; stroke: #74777f; stroke-width: 1.200; }
.tbl { position: absolute; }
.tbl-name { height: 8px; line-height: 8px; margin: 0 0 2px 1px; white-space: nowrap; }
.tbl-box { background: #21252e; border: 2px solid #4b4f5a; padding: 1.500px 2.500px 0 2.500px; }
.row { display: grid; height: 10.500px; line-height: 10.500px; white-space: nowrap; padding-left: 1px; }
.tbl-rule { height: 1px; background: #3a3e47; margin: 3px 0; }
.yl { color: #b0a514; }
.or { color: #c9691f; }
.bl { color: #4079d6; }
.t-spec { left: 53px; top: 42px; width: 192px; }
.t-spec .tbl-box { height: 45px; }
.t-spec .row { grid-template-columns: 88px 61px 1fr; }
.t-test { left: 366px; top: 32px; width: 154px; }
.t-test .tbl-box { height: 67px; }
.t-test .row { grid-template-columns: 47px 61px 19px 1fr; }
.t-supply { left: 55px; top: 227px; width: 144px; }
.t-supply .tbl-box { height: 56px; }
.t-supply .row { grid-template-columns: 39px 61px 1fr; }
.t-link { left: 375px; top: 227px; width: 138px; }
.t-link .tbl-box { height: 56px; }
.t-link .row { grid-template-columns: 63px 27px 19px 1fr; }
.note { position: absolute; height: 22px; background: #2a2d34; line-height: 20px; padding-left: 8px; white-space: nowrap; }
.note::before { content: ""; position: absolute; left: 0; top: 0; width: 0; height: 0; border-bottom: 7px solid #6a6d75; border-left: 7px solid transparent; }
.n-passes { left: 281px; top: 59px; width: 39px; }
.n-supplies { left: 435px; top: 160px; width: 68px; }
.n-has { left: 261px; top: 252px; width: 27px; padding-left: 9px; }

/* right gutter */
.gutter { flex: 1; position: relative; background: #f8f9fa; display: flex; justify-content: flex-end; padding: 30px 1px 0 0; }
.scroll-thumb { width: 9px; height: 306px; background: #dadce0; border-radius: 5px; }
.explore { position: absolute; right: 14px; bottom: 8px; width: 34px; height: 33px; background: #fff; border: 1px solid #dadce0; border-radius: 4px; display: flex; align-items: center; justify-content: center; }
.explore-i { width: 16px; height: 16px; fill: #5f6368; }

/* side panel */
.sidepanel { width: 50px; flex: none; background: #fff; display: flex; flex-direction: column; align-items: center; padding-top: 16px; }
.sp-i { width: 18px; height: 18px; margin-bottom: 32.500px; }
.cal-num { font-family: Roboto, sans-serif; font-size: 9px; font-weight: 700; fill: #4285f4; }
.sp-rule { width: 18px; height: 1px; background: #dadce0; margin-top: -2px; }
.sp-plus { width: 12px; height: 12px; margin-top: 33px; fill: none; stroke: #80868b; stroke-width: 1.800; }
.sp-chev { width: 8px; height: 12px; margin-top: 254px; fill: none; stroke: #5f6368; stroke-width: 1.800; }

/* taskbar */
.taskbar { height: 40px; flex: none; background: #252525; display: flex; align-items: stretch; color: #fff; }
.start { width: 48px; display: flex; align-items: center; justify-content: center; }
.win-logo { width: 16px; height: 16px; }
.search { width: 344px; background: #f2f2f2; border: 1px solid #b8b8b8; border-bottom: 0; display: flex; align-items: center; padding-left: 13px; color: #222; font-family: "Open Sans", sans-serif; font-size: 14px; }
.search-i { width: 16px; height: 16px; fill: none; stroke: #222; stroke-width: 1.200; margin-right: 10px; }
.slot { height: 40px; display: flex; align-items: center; justify-content: center; position: relative; flex: none; }
.w48 { width: 48px; }
.w47 { width: 47px; }
.sl1 { margin-left: 1px; }
.sl2 { margin-left: 2px; }
.sl3 { margin-left: 3px; }
.sl4 { margin-left: 4px; }
.running { box-shadow: inset 0 -2px 0 #76b9ed; }
.active-app { background: #414141; }
.cortana { width: 14px; height: 14px; border: 2.500px solid #fff; border-radius: 50%; }
.taskview { width: 16px; height: 16px; fill: none; stroke: #fff; stroke-width: 1; }
.tb-app { width: 22px; height: 22px; }
.badge { position: absolute; left: 26px; top: 18px; width: 27px; height: 15px; border-radius: 8px; background: #252525; border: 1px solid #bbb; font-family: "Open Sans", sans-serif; font-size: 10px; font-weight: 600; line-height: 13px; text-align: center; }
.sublime { width: 24px; height: 24px; background: #3f3f3f; border-radius: 3px; display: flex; align-items: center; justify-content: center; }
.subl-i { width: 14px; height: 16px; }
.sticky { width: 22px; height: 22px; background: #ffd600; border-radius: 1px; position: relative; display: block; }
.sticky-fold { position: absolute; right: 0; bottom: 0; width: 11px; height: 11px; }
.chrome-s { position: absolute; left: 24px; top: 20px; width: 15px; height: 15px; border-radius: 50%; background: #37474f; font-size: 9px; line-height: 15px; text-align: center; }
.cmd { width: 23px; height: 22px; background: #0c0c0c; border: 1px solid #aaa; border-top: 3px solid #aaa; display: block; }
.cmd-text { display: block; font-family: "DejaVu Sans Mono", monospace; font-size: 6px; line-height: 10px; padding-left: 1px; color: #ddd; }

/* tray */
.tray { flex: 1; display: flex; align-items: center; padding-left: 85px; font-family: "Open Sans", sans-serif; font-size: 12px; }
.tray-weather { width: 21px; height: 17px; }
.temp { font-size: 14px; margin-left: 10px; width: 39px; white-space: nowrap; }
.tray-chev { width: 12px; height: 8px; margin-left: 7px; fill: none; stroke: #fff; stroke-width: 1.200; }
.tray-i { fill: none; stroke: #fff; stroke-width: 1; }
.fillw { fill: #fff; stroke: none; }
.t-meet { width: 14px; height: 16px; margin-left: 13px; }
.t-batt { width: 18px; height: 14px; margin-left: 6px; }
.t-wifi { width: 14px; height: 14px; margin-left: 11px; }
.t-vol { width: 15px; height: 15px; margin-left: 6px; }
.lang { margin-left: 11px; width: 30px; }
.clock { width: 64px; margin-left: 4px; display: flex; flex-direction: column; align-items: center; line-height: 20px; font-size: 11.200px; white-space: nowrap; }
.notif { width: 15px; height: 15px; margin-left: 15px; fill: none; stroke: #fff; stroke-width: 1; }
```
